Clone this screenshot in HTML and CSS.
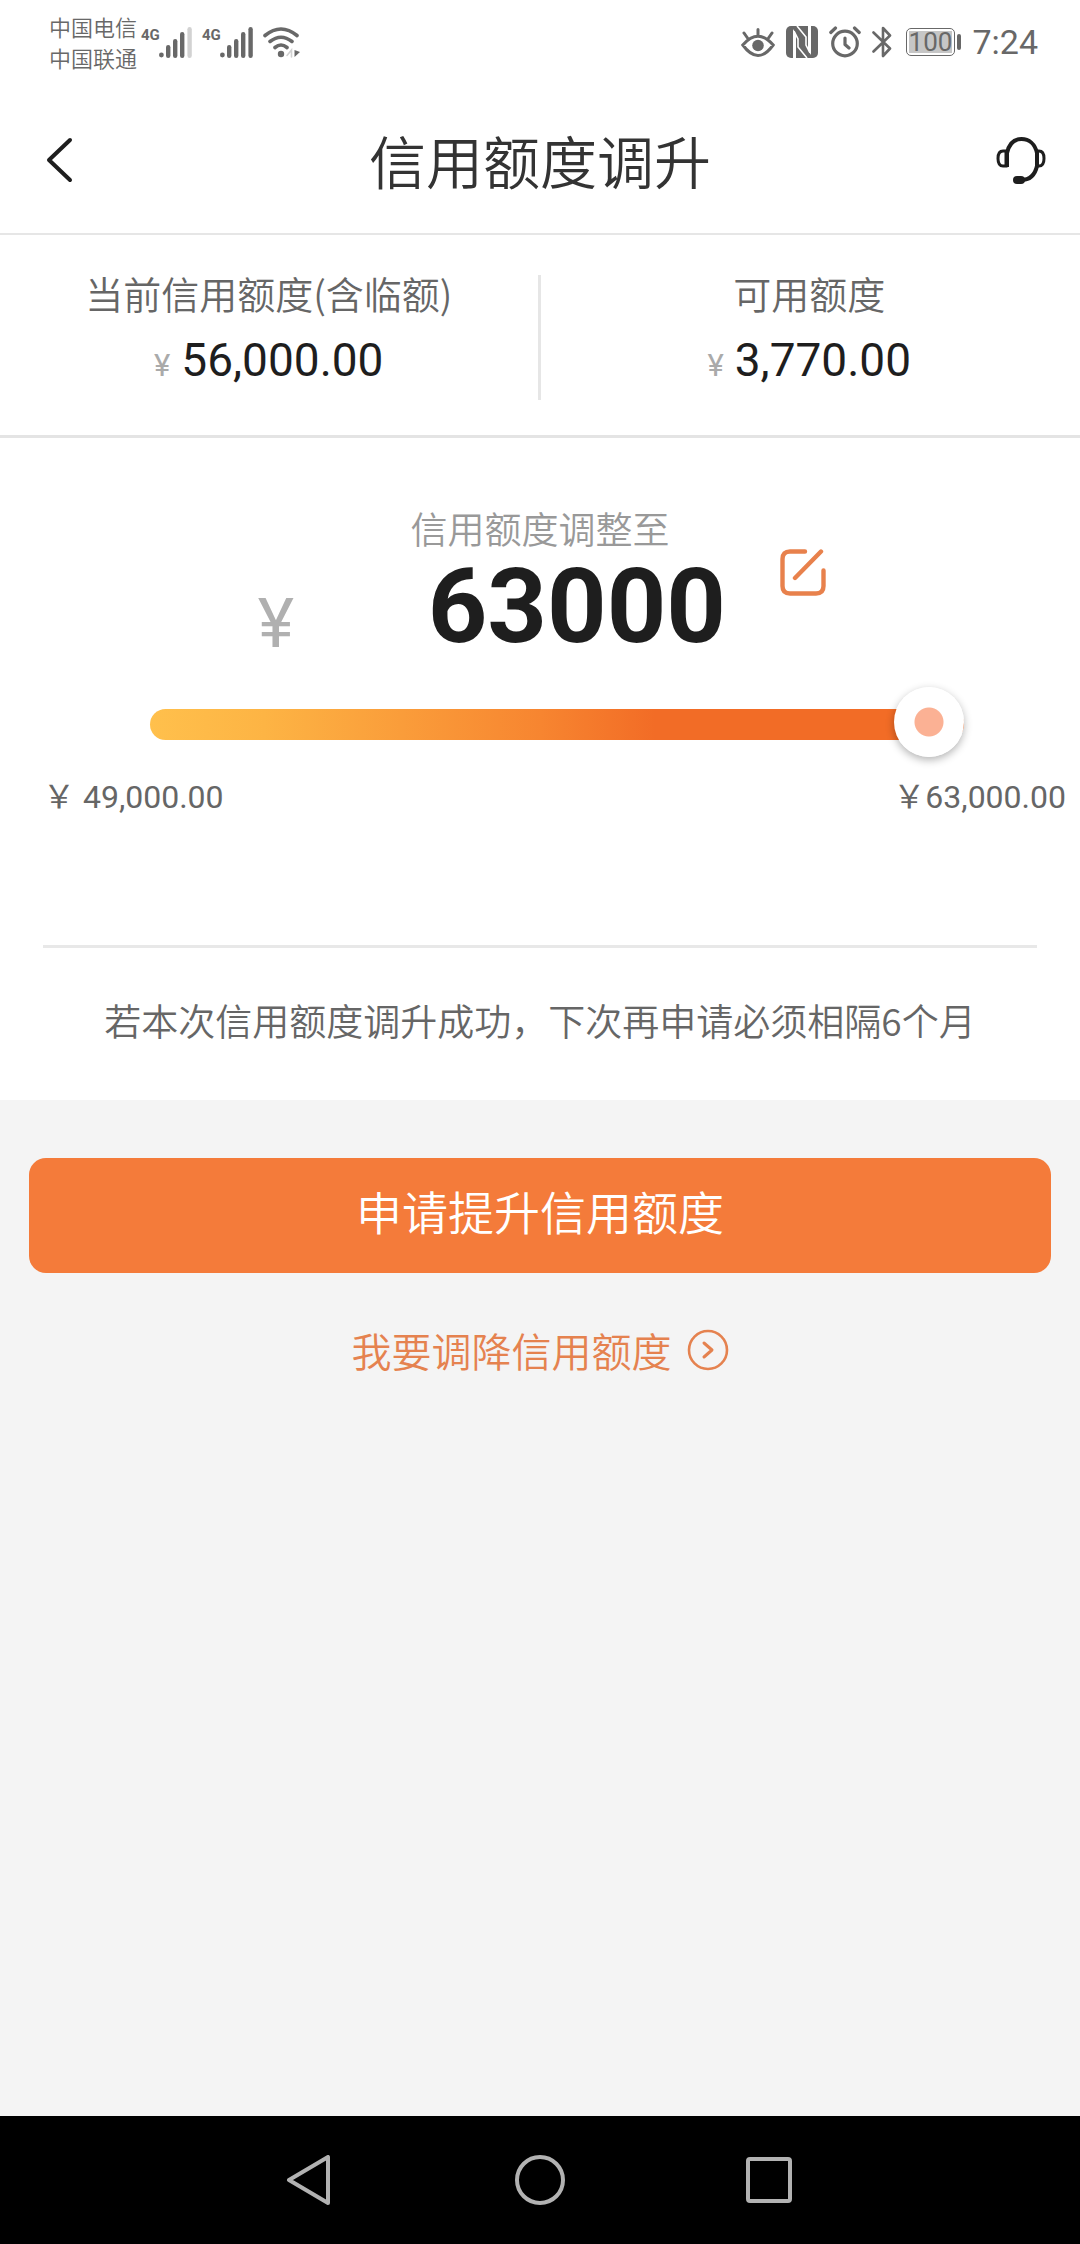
FILE: index.html
```html
<!DOCTYPE html>
<html lang="zh-CN">
<head>
<meta charset="utf-8">
<meta name="viewport" content="width=device-width, initial-scale=1">
<title>信用额度调升</title>
<link rel="stylesheet" href="styles.css">
</head>
<body>
<div class="screen">
  <div class="status">
    <div class="status-side">
      <div class="carriers"><span>中国电信</span><span>中国联通</span></div>
      <div class="signal">
        <span class="network">4G</span>
        <svg width="34" height="31" viewBox="0 0 34 31" fill="#686868" aria-hidden="true">
          <circle cx="2.4" cy="28" r="2.4"/><rect x="7" y="18" width="4.4" height="13" rx="2.2"/><rect x="14" y="12" width="4.4" height="19" rx="2.2"/><rect x="21" y="5" width="4.4" height="26" rx="2.2"/><rect x="28.4" y="0" width="4.4" height="31" rx="2.2" fill="#d2d2d2"/>
        </svg>
      </div>
      <div class="signal">
        <span class="network">4G</span>
        <svg width="34" height="31" viewBox="0 0 34 31" fill="#686868" aria-hidden="true">
          <circle cx="2.4" cy="28" r="2.4"/><rect x="7" y="18" width="4.4" height="13" rx="2.2"/><rect x="14" y="12" width="4.4" height="19" rx="2.2"/><rect x="21" y="5" width="4.4" height="26" rx="2.2"/><rect x="28.4" y="0" width="4.4" height="31" rx="2.2"/>
        </svg>
      </div>
      <svg width="38" height="31" viewBox="0 0 38 31" fill="none" stroke="#686868" stroke-width="3.6" stroke-linecap="round" aria-hidden="true">
        <path d="M2 8.5Q18 -4.500 34 8.500M7 14.500Q18 6 29 14.500M12 20.500Q18 15.500 24 20.500"/>
        <circle cx="18" cy="27" r="3.200" fill="#686868" stroke="none"/>
        <path d="M24 28.500L28.500 23V30" stroke="#d2d2d2" stroke-width="1.600"/>
        <path d="M31.500 23V30L37 25Z" fill="#686868" stroke="none"/>
      </svg>
    </div>
    <div class="status-side status-right">
      <svg width="34" height="32" viewBox="0 0 34 32" fill="none" stroke="#686868" stroke-width="3" stroke-linecap="round" aria-hidden="true">
        <path d="M1.800 19Q17 1.500 32.200 19Q17 40 1.800 19ZM17 9V3.500M6.500 12L3 7M27.500 12L31 7"/>
        <circle cx="17" cy="19.500" r="5.800" fill="#686868" stroke="none"/>
      </svg>
      <svg width="32" height="32" viewBox="0 0 32 32" aria-hidden="true">
        <rect width="32" height="32" rx="5" fill="#686868"/>
        <path d="M7 3L10 8V32H7ZM25 29L22 24V0H25Z" fill="#fff"/>
        <path d="M8 5L12 13V21L21 32M24 27L20 19V11L11 0" fill="none" stroke="#fff" stroke-width="1.600"/>
      </svg>
      <svg width="32" height="32" viewBox="0 0 32 32" fill="none" stroke="#686868" stroke-width="3.200" stroke-linecap="round" stroke-linejoin="round" aria-hidden="true">
        <circle cx="16" cy="17.500" r="12.300"/><path d="M16 12V18.500L20 22M1.800 6.500L6.500 2M30.200 6.500L25.500 2"/>
      </svg>
      <svg width="20" height="32" viewBox="0 0 20 32" fill="none" stroke="#686868" stroke-width="2.600" stroke-linejoin="round" stroke-linecap="round" aria-hidden="true">
        <path d="M1.500 6.500L18 22.500L11 30V2L18 9.500L1.500 25.500"/>
      </svg>
      <span class="battery"><span class="battery-cell"><span class="battery-level">100</span></span></span>
      <span class="time">7:24</span>
    </div>
  </div>

  <header class="titlebar">
    <button class="icon-button" type="button" aria-label="返回">
      <svg width="27" height="46" viewBox="0 0 27 46" fill="none" stroke="#1e1e1e" stroke-width="4" stroke-linecap="round" stroke-linejoin="round"><path d="M24 3L3 23L24 43"/></svg>
    </button>
    <h1>信用额度调升</h1>
    <button class="icon-button" type="button" aria-label="客服">
      <svg width="50" height="48" viewBox="0 0 50 48" fill="none" stroke="#1e1e1e" stroke-width="4"><path d="M11 31V17C13 8 18 3 25.500 3S39 8 41 17V30C39 39 34 44 25 44"/><path d="M10 15H7Q2 15 2 22.500T7 30H10ZM41 15H43Q48 15 48 22.500T43 30H41Z" stroke-width="3"/><rect x="17" y="40" width="12" height="8" rx="4" fill="#1e1e1e" stroke="none"/></svg>
    </button>
  </header>

  <main>
    <section class="summary">
      <div class="stat">
        <h2>当前信用额度(含临额)</h2>
        <p class="amount"><span class="yen">¥</span>56,000.00</p>
      </div>
      <div class="divider"></div>
      <div class="stat">
        <h2>可用额度</h2>
        <p class="amount"><span class="yen">¥</span>3,770.00</p>
      </div>
    </section>

    <form class="adjust" id="adjust">
      <div class="editor">
        <span class="currency">¥</span>
        <div class="field">
          <label for="limit">信用额度调整至</label>
          <input class="limit" id="limit" type="text" inputmode="numeric" value="63000">
        </div>
        <button class="icon-button edit" type="button" aria-label="编辑额度">
          <svg width="46" height="47" viewBox="0 0 46 47" fill="none" stroke="#e8814c" stroke-width="4.400" stroke-linecap="round"><path d="M25 2.500H10Q2.500 2.500 2.500 10V37Q2.500 44.500 10 44.500H36Q43.500 44.500 43.500 37V21.500M41 2.500L15 29"/></svg>
        </button>
      </div>
      <input class="slider" type="range" min="49000" max="63000" step="1000" value="63000" aria-label="信用额度">
      <div class="bounds"><span>￥ 49,000.00</span><span>￥63,000.00</span></div>
      <p class="note">若本次信用额度调升成功，下次再申请必须相隔6个月</p>
    </form>

    <div class="actions">
      <button class="primary" type="submit" form="adjust">申请提升信用额度</button>
      <a class="lower" href="#lower">我要调降信用额度
        <svg width="42" height="42" viewBox="0 0 42 42" fill="none" stroke="#e5824f" stroke-width="2.600" stroke-linecap="round" stroke-linejoin="round" aria-hidden="true"><circle cx="21" cy="21" r="19"/><path d="M17 14L25 21L17 28" stroke-width="3"/></svg>
      </a>
    </div>
  </main>

  <nav class="system-nav" aria-label="系统导航">
    <button class="icon-button" type="button" aria-label="后退">
      <svg width="50" height="50" viewBox="0 0 50 50" fill="none" stroke="#b2b2b2" stroke-width="4" stroke-linejoin="round"><path d="M42 2V48L3 25Z"/></svg>
    </button>
    <button class="icon-button" type="button" aria-label="主屏幕">
      <svg width="50" height="50" viewBox="0 0 50 50" fill="none" stroke="#b2b2b2" stroke-width="4"><circle cx="25" cy="25" r="23"/></svg>
    </button>
    <button class="icon-button" type="button" aria-label="最近任务">
      <svg width="50" height="50" viewBox="0 0 50 50" fill="none" stroke="#b2b2b2" stroke-width="4"><rect x="4" y="4" width="42" height="42" rx="2"/></svg>
    </button>
  </nav>
</div>
</body>
</html>
```

FILE: styles.css
```css
* {
  box-sizing: border-box;
  margin: 0;
  padding: 0;
}

body {
  background: #f4f4f4;
  color: #1e1e1e;
  font-family: Roboto, "Noto Sans CJK SC", sans-serif;
}

h1,
h2,
.carriers,
.field label,
.note,
.primary,
.lower {
  font-family: "Noto Sans CJK SC DemiLight", "Noto Sans CJK SC", sans-serif;
  font-weight: 350;
}

svg {
  display: block;
  flex: none;
}

.screen {
  display: flex;
  flex-direction: column;
  min-height: 100vh;
}

.icon-button {
  display: flex;
  border: 0;
  background: none;
}

/* Phone status bar */
.status {
  display: flex;
  justify-content: space-between;
  padding: 11px 42px 17px 49px;
  background: #fff;
  color: #686868;
}

.status-side {
  display: flex;
  align-items: center;
  gap: 9px;
}

.carriers {
  display: flex;
  flex-direction: column;
  margin-right: -5px;
  font-size: 22px;
  font-weight: 300;
  line-height: 31px;
}

.signal {
  display: flex;
}

.network {
  width: 18px;
  font-size: 15px;
  font-weight: 700;
  line-height: 16px;
}

.status-right {
  gap: 11px;
}

.battery {
  display: flex;
  align-items: center;
  gap: 2px;
  margin-left: 3px;
}

.battery::after {
  width: 4px;
  height: 16px;
  border-radius: 2px;
  background: #686868;
  content: "";
}

.battery-cell {
  padding: 2px;
  border: 1px solid #686868;
  border-radius: 5px;
}

.battery-level {
  display: block;
  background: #c6c6c6;
  font-size: 26px;
  line-height: 22px;
}

.time {
  font-size: 34px;
  line-height: 40px;
}

/* Title bar */
.titlebar {
  display: grid;
  grid-template-columns: 38px 1fr 50px;
  align-items: center;
  height: 145px;
  padding: 0 34px 4px 46px;
  border-bottom: 2px solid #e6e6e6;
  background: #fff;
}

h1 {
  padding-bottom: 2px;
  color: #333;
  font-size: 57px;
  line-height: 76px;
  text-align: center;
}

/* Current and available limits */
.summary {
  display: grid;
  grid-template-columns: 1fr 3px 1fr;
  padding: 32px 2px 45px 0;
  border-bottom: 3px solid #e4e4e4;
  background: #fff;
  text-align: center;
}

.divider {
  margin: 8px 0 -10px;
  background: #e6e6e6;
}

h2 {
  color: #666;
  font-size: 38px;
  line-height: 52px;
}

.amount {
  margin-top: 11px;
  font-size: 46px;
  line-height: 60px;
}

.yen {
  margin-right: 11px;
  color: #aaa;
  font-size: 31px;
  line-height: 31px;
}

/* Limit editor */
.adjust {
  padding-top: 64px;
  background: #fff;
}

.editor {
  display: grid;
  grid-template-columns: 1fr 372px 1fr;
  gap: 54px;
}

.currency {
  align-self: end;
  justify-self: end;
  margin-right: 6px;
  color: #b0b0b0;
  font-size: 69px;
  line-height: 60px;
}

.field {
  display: flex;
  flex-direction: column;
  gap: 4px;
}

.field label {
  color: #999;
  font-size: 37px;
  line-height: 52px;
  text-align: center;
}

.limit {
  width: 100%;
  height: 96px;
  border: 0;
  background: none;
  color: #1e1e1e;
  font: 700 104px/96px Roboto, sans-serif;
  text-align: right;
}

.edit {
  align-self: start;
  justify-self: start;
  margin-top: 47px;
}

.slider {
  display: block;
  width: calc(100% - 266px);
  height: 71px;
  margin: 35px 116px 15px 150px;
  background: none;
  appearance: none;
}

.slider::-webkit-slider-runnable-track {
  height: 31px;
  border-radius: 16px;
  background: linear-gradient(90deg, #ffc04c, #fdb444 14%, #f78530 48%, #f26c26 62%);
}

.slider::-webkit-slider-thumb {
  width: 70px;
  height: 70px;
  margin-top: -22px;
  border-radius: 50%;
  background: radial-gradient(circle, #fbb194 14px, #fff 15px);
  box-shadow: 0 3px 8px rgba(0, 0, 0, 0.3);
  appearance: none;
}

.bounds {
  display: flex;
  justify-content: space-between;
  padding: 0 14px 0 43px;
  color: #666;
  font-size: 32px;
  line-height: 44px;
}

.note {
  margin: 126px 43px 0;
  padding: 46px 0 54px;
  border-top: 3px solid #e8e8e8;
  color: #666;
  font-size: 37px;
  line-height: 52px;
  text-align: center;
}

/* Actions */
.actions {
  display: flex;
  flex-direction: column;
  align-items: center;
  gap: 47px;
  padding: 58px 29px;
}

.primary {
  width: 100%;
  height: 115px;
  padding-bottom: 12px;
  border: 0;
  border-radius: 17px;
  background: #f47b3a;
  color: #fff;
  font-size: 46px;
}

.lower {
  display: flex;
  align-items: center;
  gap: 15px;
  color: #e5824f;
  font-size: 40px;
  line-height: 60px;
  text-decoration: none;
}

/* Phone navigation bar */
.system-nav {
  display: grid;
  grid-template-columns: repeat(3, 229px);
  align-items: center;
  justify-content: center;
  justify-items: center;
  height: 128px;
  margin-top: auto;
  background: #000;
}
```
